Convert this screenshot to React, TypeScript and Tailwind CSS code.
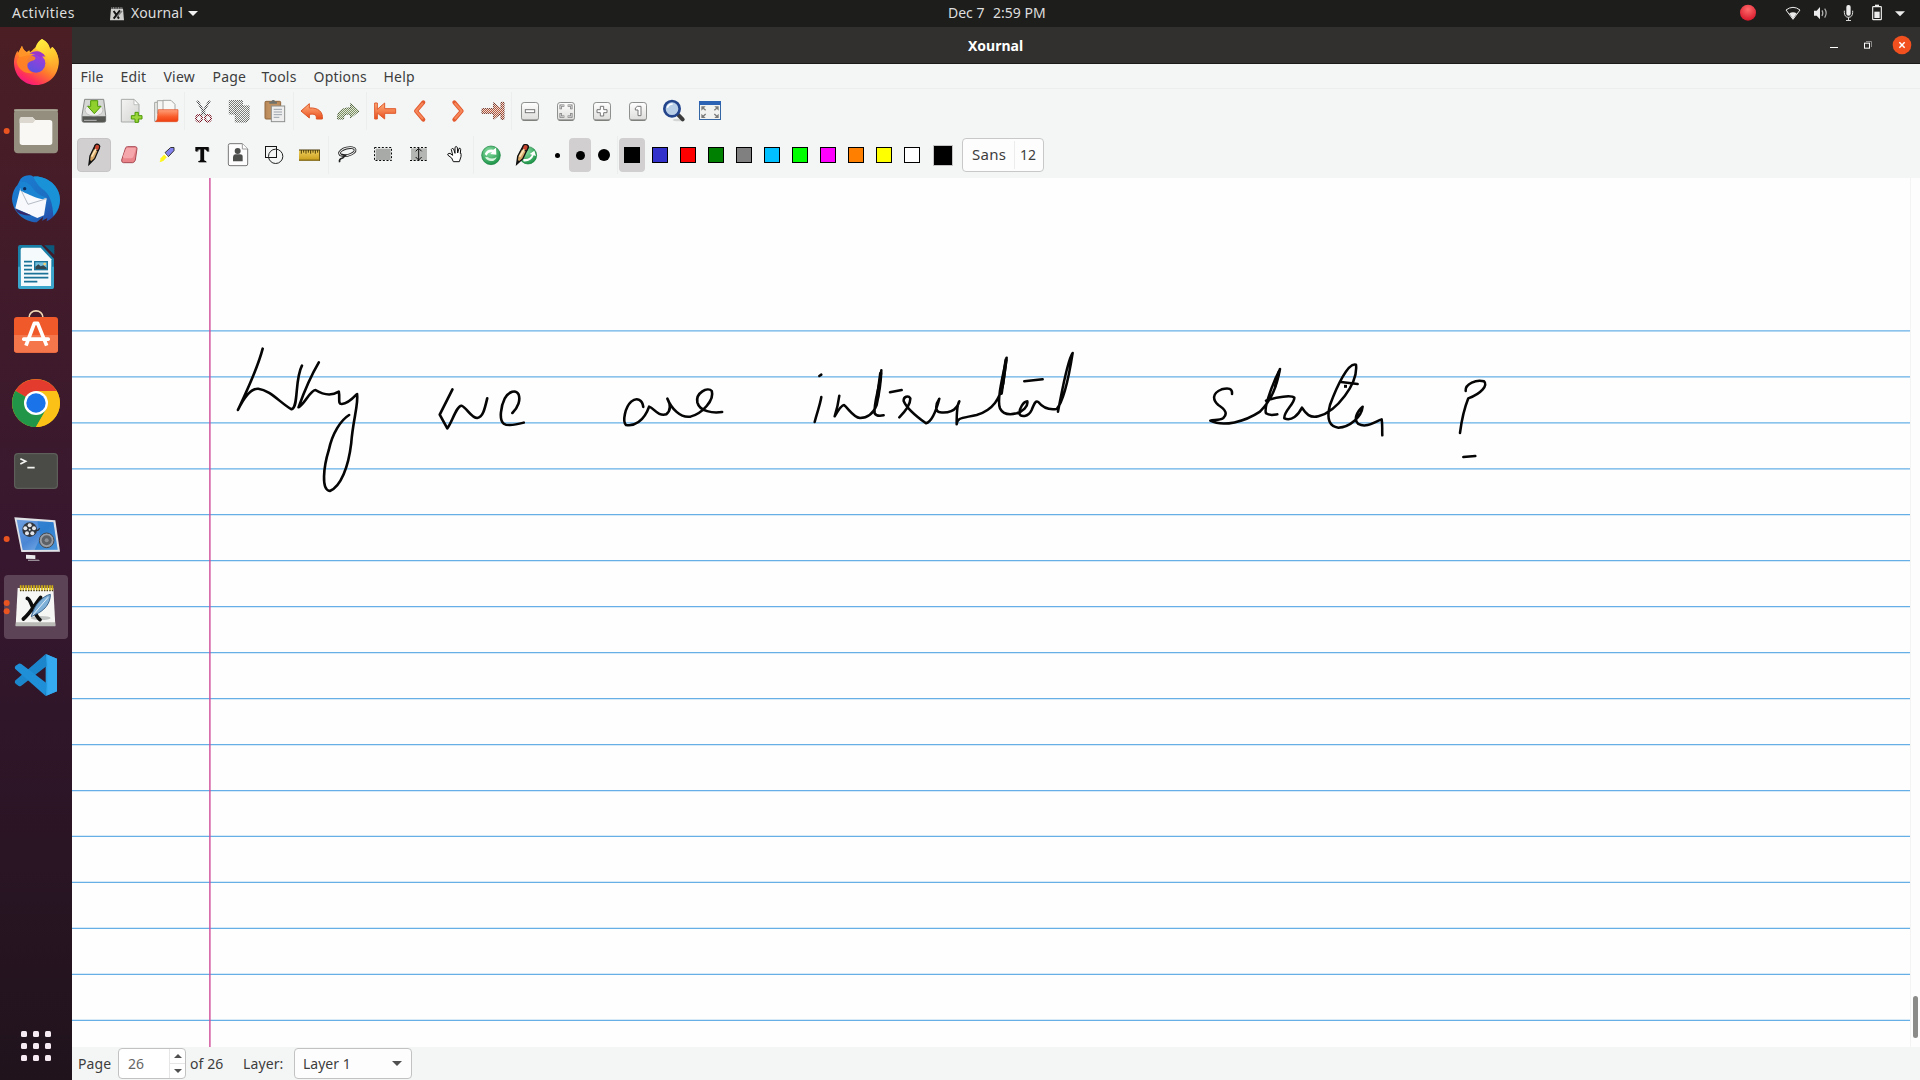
import React from "react";

type IconProps = { cx: number; cy: number; children: React.ReactNode };

/** 36px toolbar cell; artwork is drawn on a 3x grid around (cx, cy). */
function Icon({ cx, cy, children }: IconProps) {
  return (
    <svg className="h-9 w-9 shrink-0" viewBox={`${cx - 54} ${cy - 54} 108 108`}>
      {children}
    </svg>
  );
}

/** 72x68 launcher cell on the same 3x grid. */
function DockIcon({ top, children }: { top: number; children: React.ReactNode }) {
  return (
    <svg className="h-[68px] w-[72px] shrink-0" viewBox={`0 ${top} 216 204`}>
      {children}
    </svg>
  );
}

function Separator() {
  return <div className="h-[38px] w-px shrink-0 bg-[#eceded]" />;
}

function Defs() {
  return (
    <svg className="absolute h-0 w-0">
      <defs>
        <pattern id="hatch" width="6" height="6" patternUnits="userSpaceOnUse">
          <rect width="3" height="3" fill="#f4f6f6" />
          <rect x="3" y="3" width="3" height="3" fill="#f4f6f6" />
        </pattern>
        <linearGradient id="orange" x1="0" y1="0" x2="0" y2="1">
          <stop offset="0" stopColor="#fcb27d" />
          <stop offset="0.5" stopColor="#f5804f" />
          <stop offset="1" stopColor="#e84c1c" />
        </linearGradient>
        <linearGradient id="folder" x1="0" y1="0" x2="0" y2="1">
          <stop offset="0" stopColor="#ffa27c" />
          <stop offset="0.6" stopColor="#fa5a28" />
          <stop offset="1" stopColor="#ee3f10" />
        </linearGradient>
        <linearGradient id="paper" x1="0" y1="0" x2="1" y2="1">
          <stop offset="0" stopColor="#f4f4f2" />
          <stop offset="1" stopColor="#d3d5d2" />
        </linearGradient>
        <linearGradient id="key" x1="0" y1="0" x2="0" y2="1">
          <stop offset="0" stopColor="#ffffff" />
          <stop offset="1" stopColor="#dcdcda" />
        </linearGradient>
        <linearGradient id="gold" x1="0" y1="0" x2="0" y2="1">
          <stop offset="0" stopColor="#f0d060" />
          <stop offset="1" stopColor="#c89c18" />
        </linearGradient>
        <radialGradient id="greenball" cx="0.4" cy="0.3" r="0.8">
          <stop offset="0" stopColor="#8be0a4" />
          <stop offset="1" stopColor="#0f8a3c" />
        </radialGradient>
        <linearGradient id="foxbody" x1="0.85" y1="0" x2="0.25" y2="1">
          <stop offset="0" stopColor="#fff14a" />
          <stop offset="0.35" stopColor="#ffbe2c" />
          <stop offset="0.6" stopColor="#ff7a2c" />
          <stop offset="0.85" stopColor="#ff2e5c" />
          <stop offset="1" stopColor="#f0148a" />
        </linearGradient>
        <linearGradient id="foxflame" x1="0.4" y1="0" x2="0.7" y2="1">
          <stop offset="0" stopColor="#ffec3e" />
          <stop offset="0.5" stopColor="#ffc62e" />
          <stop offset="1" stopColor="#ff8a2c" stopOpacity="0.5" />
        </linearGradient>
        <linearGradient id="foxball" x1="0.8" y1="0" x2="0.3" y2="1">
          <stop offset="0" stopColor="#a63ad8" />
          <stop offset="1" stopColor="#5a52e0" />
        </linearGradient>
        <linearGradient id="bird" x1="0" y1="0" x2="1" y2="1">
          <stop offset="0" stopColor="#1a7fd4" />
          <stop offset="0.6" stopColor="#1d6ec2" />
          <stop offset="1" stopColor="#2b3fa0" />
        </linearGradient>
        <linearGradient id="screen" x1="0" y1="0" x2="1" y2="1">
          <stop offset="0" stopColor="#6f9fe0" />
          <stop offset="0.5" stopColor="#4a86d4" />
          <stop offset="1" stopColor="#8fc0f0" />
        </linearGradient>
        <radialGradient id="record" cx="0.5" cy="0.3" r="0.7">
          <stop offset="0" stopColor="#ff6b6b" />
          <stop offset="1" stopColor="#d8182c" />
        </radialGradient>
      </defs>
    </svg>
  );
}

function Dock() {
  return (
    <nav className="flex w-[72px] shrink-0 flex-col bg-linear-to-b from-[#4b1e24] via-[#37172f] to-[#20131c] pt-[2px]">
      <DockIcon top={87}>
        <path d="M126 117C142 126 148 136 150 148L157 141C168 150 176 168 176 186C176 226 146 255 109 255C71 255 42 226 42 188C42 176 46 160 53 152L54 160L66 137C68 145 72 151 80 156L88 151L90 157C98 152 104 142 109 142C112 128 118 121 126 117Z" fill="url(#foxbody)" />
        <path d="M126 117C142 126 148 136 150 148L157 141C168 150 176 168 176 186C174 206 164 220 150 226C160 206 156 180 138 166C126 158 110 150 106 143C110 130 118 122 126 117Z" fill="url(#foxflame)" />
        <circle cx="108" cy="190" r="28" fill="url(#foxball)" />
        <path d="M88 162C102 148 128 152 136 170C128 168 124 170 122 174C112 164 100 160 88 162Z" fill="#9a36cc" />
        <path d="M50 186C54 166 74 162 92 166C100 168 108 172 106 176C104 182 90 182 84 190C78 202 86 216 100 219C76 224 54 208 50 186Z" fill="#ff8422" opacity="0.9" />
        <path d="M66 137C68 148 76 156 92 164L58 172L54 160Z" fill="#ff9428" />
      </DockIcon>
      <DockIcon top={291}>
        <circle cx="20" cy="393" r="9" fill="#e95420" />
        <rect x="42" y="328" width="132" height="132" rx="12" fill="#938e7e" />
        <rect x="42" y="328" width="132" height="5" rx="2" fill="#aaa695" />
        <path d="M59 359Q59 351 67 351H97L106 360H149Q157 360 157 368V427Q157 435 149 435H67Q59 435 59 427Z" fill="#faf8f4" />
        <path d="M59 359Q59 351 67 351H97L106 360L99 369H59Z" fill="#dcd8cf" />
      </DockIcon>
      <DockIcon top={495}>
        <path d="M62 536C76 524 92 524 100 530C136 526 180 554 180 600C180 630 164 652 140 664L142 654L126 662L130 650L110 667C70 664 38 636 36 596C38 576 44 564 52 556Z" fill="url(#bird)" />
        <path d="M100 530C136 526 180 554 180 600C178 622 172 636 160 648C158 610 150 580 126 566C114 556 106 544 100 530Z" fill="#1a92d8" />
        <path d="M61 565L140 596L132 646L112 654L46 625Z" fill="#f7f9fc" />
        <path d="M61 566L84 613L140 596" fill="none" stroke="#b6bcc6" strokeWidth="3" />
        <path d="M58 546C72 540 92 552 100 566C108 578 124 590 142 592L128 598C100 592 76 578 62 572Z" fill="#1a84d2" />
        <path d="M46 626L94 646C80 648 62 644 52 636Z" fill="#372a6a" />
        <circle cx="74" cy="566" r="5" fill="#0d2a58" />
      </DockIcon>
      <DockIcon top={699}>
        <path d="M133 736H163V764Z" fill="#0b5a7c" />
        <path d="M60 735H124L162 776V860Q162 867 155 867H61Q54 867 54 860V742Q54 735 60 735Z" fill="#1a7fa6" />
        <path d="M68 743H122L154 778V858H62V749Q62 743 68 743Z" fill="#f5fafc" />
        <path d="M54 800H62V858H154V800H162V860Q162 867 155 867H61Q54 867 54 860Z" fill="#3ba6cc" />
        <path d="M72 785H96M72 797H96M72 809H96M72 821H145M72 833H145M72 845H112" stroke="#1a7298" strokeWidth="5" />
        <rect x="102" y="783" width="42" height="28" fill="#1a7298" />
        <rect x="106" y="787" width="34" height="20" fill="#73c0de" />
        <path d="M106 807V800L115 793L122 799L130 796L140 803V807Z" fill="#34444c" />
        <circle cx="134" cy="792" r="4" fill="#f7d070" />
      </DockIcon>
      <DockIcon top={903}>
        <path d="M87 953C87 926 129 926 129 953" fill="none" stroke="#f0d8b4" strokeWidth="5" />
        <rect x="42" y="951" width="132" height="107" rx="9" fill="#f05a2a" />
        <path d="M42 1005H174V1049Q174 1058 165 1058H51Q42 1058 42 1049Z" fill="#f5764a" />
        <path d="M78 1037L103 970H113L140 1037" fill="none" stroke="#fff" strokeWidth="11" strokeLinejoin="round" />
        <rect x="66" y="1012" width="84" height="11" rx="5" fill="#fff" />
      </DockIcon>
      <DockIcon top={27}>
        <circle cx="108" cy="129" r="72" fill="#fbc116" />
        <path d="M108 129L46 93A72 72 0 0 1 170 93Z" fill="#e33b2e" />
        <path d="M46 93A72 72 0 0 0 108 201L139 147L108 129Z" fill="#229648" />
        <path d="M46 93L77 147L108 129Z" fill="#229648" />
        <path d="M108 93H170A72 72 0 0 1 108 201L139 147Z" fill="#fbc116" />
        <circle cx="108" cy="129" r="36" fill="#fff" />
        <circle cx="108" cy="129" r="29" fill="#1a73e8" />
      </DockIcon>
      <DockIcon top={231}>
        <rect x="42" y="279" width="132" height="108" rx="11" fill="#4a4a46" />
        <rect x="44" y="281" width="128" height="104" rx="9" fill="none" stroke="#63635f" strokeWidth="3" />
        <path d="M61 296L77 304L61 312M82 323H104" fill="none" stroke="#f4f4f2" strokeWidth="5" />
      </DockIcon>
      <DockIcon top={435}>
        <circle cx="20" cy="537" r="9" fill="#e95420" />
        <path d="M43 472L166 481L180 575L64 576Z" fill="#dfe1e6" />
        <path d="M50 479L160 487L173 569L68 570Z" fill="url(#screen)" />
        <path d="M112 484L160 487L173 569H104L122 530Z" fill="#1b78cc" opacity="0.6" />
        <circle cx="89" cy="509" r="22" fill="#33373d" />
        <g fill="#e4e6ea">
          <circle cx="89" cy="496" r="6" />
          <circle cx="102" cy="505" r="6" />
          <circle cx="97" cy="520" r="6" />
          <circle cx="81" cy="520" r="6" />
          <circle cx="76" cy="505" r="6" />
          <circle cx="89" cy="509" r="3" />
        </g>
        <path d="M108 512Q116 512 119 505" fill="none" stroke="#33373d" strokeWidth="4" />
        <circle cx="140" cy="541" r="22" fill="#9a9ea5" stroke="#454950" strokeWidth="3" />
        <circle cx="140" cy="541" r="15" fill="#5c6067" />
        <circle cx="140" cy="541" r="6" fill="#8b8f96" />
        <path d="M78 584L106 586V597L78 596Z" fill="#e8e8ea" />
        <path d="M84 599H116L120 602H84Z" fill="#b8b4ba" />
      </DockIcon>
      <DockIcon top={639}>
        <rect x="12" y="645" width="192" height="192" rx="12" fill="#5c4356" />
        <circle cx="20" cy="729" r="9" fill="#e95420" />
        <circle cx="20" cy="754" r="9" fill="#e95420" />
        <path d="M53 684H160L166 797H47Z" fill="#f6f6f4" />
        <path d="M48 787H165L166 799H47Z" fill="#b9b9b6" />
        <path d="M62 676V692M70 676V692M78 676V692M86 676V692M94 676V692M102 676V692M110 676V692M118 676V692M126 676V692M134 676V692M142 676V692M150 676V692M157 676V692" stroke="#d4b414" strokeWidth="5" />
        <path d="M60 692H159" stroke="#4a3f18" strokeWidth="4" strokeDasharray="4 4" />
        <ellipse cx="122" cy="774" rx="30" ry="6" fill="#c2c4c4" />
        <path d="M82 715C94 716 100 765 120 779M122 712C104 735 90 760 70 777" fill="none" stroke="#0c0c0c" strokeWidth="11" strokeLinecap="round" />
        <path d="M94 770C102 735 128 708 151 703C152 730 132 754 104 764Z" fill="#7fb0d8" stroke="#38618c" strokeWidth="3" />
        <path d="M98 766L144 712" stroke="#e4f0fa" strokeWidth="3" />
      </DockIcon>
      <DockIcon top={843}>
        <path d="M137 882L171 896V994L137 1008Z" fill="#2a9fe4" />
        <path d="M137 882L45 962Q43 968 47 971L56 978Q60 980 64 977L140 918Z" fill="#1c86cc" />
        <path d="M137 1008L45 926Q43 920 47 917L56 911Q60 909 64 912L140 970Z" fill="#1f8fd8" />
        <path d="M137 882L171 896V994L137 1008Q142 1006 142 1000V890Q142 884 137 882Z" fill="#35aaf0" />
      </DockIcon>
      <div className="mt-auto mb-[19px] ml-[21px] grid w-[30px] grid-cols-3 gap-[6px]">
        {Array.from({ length: 9 }, (_, i) => (
          <span key={i} className="h-[6px] w-[6px] rounded-[1.5px] bg-[#f7ebf3]" />
        ))}
      </div>
    </nav>
  );
}

function ZoomKey({ cx, children }: { cx: number; children: React.ReactNode }) {
  return (
    <Icon cx={cx} cy={153}>
      <g transform={`translate(${cx} 0)`}>
        <rect x="-25.500" y="127.500" width="51" height="54" rx="8" fill="url(#key)" stroke="#8e908d" strokeWidth="3" />
        <path d="M-22 180H22" stroke="#6e706c" strokeWidth="3" />
        {children}
      </g>
    </Icon>
  );
}

function PencilShape() {
  return (
    <g>
      <path d="M267 493L270 468L286 435Q290 431 296 434Q301 438 298 444L284 476Z" fill="#d8a868" stroke="#111" strokeWidth="4" />
      <path d="M286 435Q290 431 296 434Q301 438 298 444L294 453L282 446Z" fill="#c6452f" stroke="#111" strokeWidth="3" />
      <path d="M275 470L288 447" stroke="#fbe3b4" strokeWidth="5" />
      <path d="M266 495L269 480L276 484Z" fill="#111" />
    </g>
  );
}

function TopToolbar() {
  return (
    <div className="flex h-[46px] items-center border-t border-[#eceeee] pb-px pl-1">
      <Icon cx={282} cy={333}>
        <path d="M254 298H311L317 346V362Q317 367 311 367H252Q246 367 246 362V346Z" fill="#d5d7d5" stroke="#868886" strokeWidth="3" />
        <path d="M247 349H317V362Q317 366 311 366H252Q247 366 247 362Z" fill="#555753" />
        <path d="M252 361H290" stroke="#b8bab8" strokeWidth="3" />
        <ellipse cx="282" cy="330" rx="27" ry="18" fill="#eeeeec" stroke="#b0b2b0" strokeWidth="2" />
        <path d="M272 302H293V319H303L283 341L263 319H272Z" fill="#8fd02c" stroke="#4e9a06" strokeWidth="3" />
      </Icon>
      <Icon cx={390} cy={333}>
        <path d="M364 298H402L417 314V366H364Z" fill="url(#paper)" stroke="#a8aaa7" strokeWidth="3" />
        <path d="M402 298V314H417Z" fill="#fff" stroke="#a8aaa7" strokeWidth="2" />
        <path d="M405 337H415V347H426V357H415V367H405V357H394V347H405Z" fill="#9bd63a" stroke="#4e9a06" strokeWidth="3" />
      </Icon>
      <Icon cx={498} cy={333}>
        <path d="M464 307H480V360L464 364Z" fill="#ecece9" stroke="#a4a6a3" strokeWidth="3" />
        <path d="M472 302H493L503 310V340H472Z" fill="#f5f5f3" stroke="#a4a6a3" strokeWidth="3" />
        <path d="M489 301H513L525 313V336H489Z" fill="#f8f8f6" stroke="#a4a6a3" strokeWidth="3" />
        <path d="M475 329H534V360Q534 365 529 365H466Q472 362 472 356Z" fill="url(#folder)" stroke="#e04a20" strokeWidth="2" />
      </Icon>
      <Separator />
      <Icon cx={609} cy={333}>
        <path d="M592 302L616 345M629 302L604 345" stroke="#4e4e50" strokeWidth="7" />
        <ellipse cx="597" cy="355" rx="9" ry="10" fill="none" stroke="#7c1424" strokeWidth="6" />
        <ellipse cx="624" cy="355" rx="9" ry="10" fill="none" stroke="#7c1424" strokeWidth="6" />
        <rect x="579" y="297" width="63" height="72" fill="url(#hatch)" />
      </Icon>
      <Icon cx={717} cy={333}>
        <path d="M688 302H727V342H688Z" fill="#7e807c" stroke="#555753" strokeWidth="3" />
        <path d="M706 318H747V358L738 366H706Z" fill="#7e807c" stroke="#555753" strokeWidth="3" />
        <rect x="684" y="297" width="66" height="72" fill="url(#hatch)" />
      </Icon>
      <Icon cx={825} cy={333}>
        <rect x="795" y="304" width="47" height="53" rx="3" fill="#b8895a" stroke="#92683c" strokeWidth="3" />
        <rect x="802" y="308" width="34" height="46" fill="#c0905f" />
        <path d="M808 311V305H814Q815 299 820 300Q825 299 825 305H831V311Z" fill="#6f716d" />
        <rect x="814" y="318" width="40" height="47" fill="#eeeeee" stroke="#8d8f8c" strokeWidth="3" />
        <path d="M821 328H846M821 336H846M821 344H846M821 352H838" stroke="#9ba2aa" strokeWidth="3" />
      </Icon>
      <Separator />
      <Icon cx={936} cy={333}>
        <path d="M903 333L928 311V324C954 322 970 336 967 357H949C950 344 944 341 928 343V354Z" fill="url(#orange)" stroke="#dc5424" strokeWidth="3" strokeLinejoin="round" />
      </Icon>
      <Icon cx={1044} cy={333}>
        <path d="M1077 333L1052 311V324C1026 322 1010 336 1013 357H1031C1030 344 1036 341 1052 343V354Z" fill="#7e9260" stroke="#42562c" strokeWidth="3" strokeLinejoin="round" />
        <rect x="1008" y="303" width="72" height="60" fill="url(#hatch)" opacity="0.85" />
      </Icon>
      <Separator />
      <Icon cx={1155} cy={333}>
        <path d="M1124 309H1132V328L1154 309V326H1187V340H1154V357L1132 339V357H1124Z" fill="url(#orange)" stroke="#e05a2c" strokeWidth="3" strokeLinejoin="round" />
      </Icon>
      <Icon cx={63} cy={153}>
        <path d="M70 127L48 153L70 179" fill="none" stroke="#e25a2e" strokeWidth="12" strokeLinejoin="round" strokeLinecap="round" />
        <path d="M69 129L48 153L69 177" fill="none" stroke="#f6875a" strokeWidth="6" strokeLinejoin="round" />
      </Icon>
      <Icon cx={171} cy={153}>
        <path d="M163 127L185 153L163 179" fill="none" stroke="#e25a2e" strokeWidth="12" strokeLinejoin="round" strokeLinecap="round" />
        <path d="M164 129L185 153L164 177" fill="none" stroke="#f6875a" strokeWidth="6" strokeLinejoin="round" />
      </Icon>
      <Icon cx={279} cy={153}>
        <path d="M246 146H281V128L303 147V127H312V178H303V160L281 178V160H246Z" fill="#b8583a" stroke="#6c2c1c" strokeWidth="3" />
        <rect x="243" y="123" width="72" height="60" fill="url(#hatch)" opacity="0.85" />
      </Icon>
      <Separator />
      <ZoomKey cx={390}>
        <rect x="-14" y="149" width="28" height="9" fill="#fff" stroke="#777" strokeWidth="3" />
      </ZoomKey>
      <ZoomKey cx={498}>
        <path d="M-16 148V137H-5M5 137H16V148M16 159V170H5M-5 170H-16V159" fill="none" stroke="#777" strokeWidth="7" />
        <path d="M-16 146V137H-6M6 137H16V146M16 161V170H6M-6 170H-16V161" fill="none" stroke="#fff" strokeWidth="2" />
      </ZoomKey>
      <ZoomKey cx={606}>
        <path d="M-5 139H5V149H15V158H5V168H-5V158H-15V149H-5Z" fill="#fff" stroke="#777" strokeWidth="3" />
      </ZoomKey>
      <ZoomKey cx={714}>
        <path d="M-2 139H9V167H0V150H-8V144Z" fill="#fff" stroke="#777" strokeWidth="3" />
      </ZoomKey>
      <Icon cx={822} cy={153}>
        <ellipse cx="836" cy="180" rx="18" ry="4" fill="#d4d6d4" />
        <path d="M834 164L848 178" stroke="#3c3c3c" strokeWidth="12" strokeLinecap="round" />
        <circle cx="816" cy="146" r="23" fill="#b9cfe8" stroke="#24458c" strokeWidth="8" />
        <path d="M802 143Q806 132 818 132" fill="none" stroke="#fff" strokeWidth="5" />
      </Icon>
      <Icon cx={930} cy={153}>
        <rect x="898.500" y="124.500" width="63" height="54" fill="#f2f2f0" stroke="#3465a4" strokeWidth="3" />
        <rect x="897" y="123" width="66" height="12" fill="#2c62b4" />
        <path d="M904 139H917L904 152ZM956 139V152L943 139ZM904 174V161L917 174ZM956 174H943L956 161Z" fill="#7c7c7c" />
        <path d="M908 143L917 151M952 143L943 151M908 170L917 162M952 170L943 162" stroke="#7c7c7c" strokeWidth="4" />
      </Icon>
    </div>
  );
}

const PEN_COLOURS = [
  "bg-[#3333cc]",
  "bg-[#ff0000]",
  "bg-[#008000]",
  "bg-[#808080]",
  "bg-[#00c0ff]",
  "bg-[#00ff00]",
  "bg-[#ff00ff]",
  "bg-[#ff8000]",
  "bg-[#ffff00]",
  "bg-white",
];

function PenToolbar() {
  return (
    <div className="flex h-[44px] items-center pb-[2px] pl-1">
      <div className="mx-px flex h-[34px] w-[34px] items-center justify-center rounded-[4px] border border-[#c6c4c4] bg-[#d1cfcf]">
        <Icon cx={282} cy={465}>
          <PencilShape />
        </Icon>
      </div>
      <Icon cx={390} cy={465}>
        <path d="M377 443Q379 440 383 440H406Q411 440 411 446L406 480Q404 487 398 488H370Q364 487 365 480Z" fill="#e8848a" stroke="#a84a52" strokeWidth="3" />
        <path d="M378 446Q380 443 384 443H405Q409 444 407 449L400 471Q398 475 393 475H373Q368 474 369 469Z" fill="#f4a6aa" />
      </Icon>
      <Icon cx={498} cy={465}>
        <g transform="translate(1 0)">
          <path d="M494 458L511 442.500H521V452L504 470Z" fill="#8282f0" stroke="#333" strokeWidth="3" />
          <path d="M479 486L481 475L494 461L502 469L489 483Z" fill="#fdf51c" />
          <path d="M477 487L484 478L487 482Z" fill="#fdf51c" />
          <path d="M491 460L501 470" stroke="#fff" strokeWidth="4" />
        </g>
      </Icon>
      <Icon cx={606} cy={465}>
        <path d="M588 443H628V456H622Q620 449 613 449V480Q613 484 620 484V488H596V484Q603 484 603 480V449Q596 449 594 456H588Z" fill="#8c8c8c" />
        <path d="M586 441H626V454H621Q619 447 612 447V479Q612 483 618 483V486H595V483Q601 483 601 479V447Q594 447 591 454H586Z" fill="#0a0a0a" />
      </Icon>
      <Icon cx={714} cy={465}>
        <path d="M690 431H727L743 447V492Q743 497 738 497H690Q685 497 685 492V436Q685 431 690 431Z" fill="#fdfdfd" stroke="#777" strokeWidth="3" />
        <path d="M727 431V447H743" fill="#fff" stroke="#999" strokeWidth="3" />
        <circle cx="713" cy="453" r="9" fill="#4c4e4c" />
        <path d="M699 484V470Q700 463 707 463H720Q728 463 728 470V484Z" fill="#4c4e4c" />
      </Icon>
      <Icon cx={822} cy={465}>
        <rect x="796.500" y="439.500" width="33" height="33" fill="none" stroke="#151515" strokeWidth="3" />
        <circle cx="827" cy="469" r="21.500" fill="none" stroke="#222" strokeWidth="3" />
      </Icon>
      <Icon cx={930} cy={465}>
        <path d="M897 450H960V482H897Z" fill="url(#gold)" />
        <path d="M897 480.500H960M958.500 450V482" stroke="#6e5a14" strokeWidth="3" />
        <path d="M904 450V461M911 450V458M918 450V461M925 450V458M932 450V461M939 450V458M946 450V461M953 450V458M897 450H960" stroke="#4a3b08" strokeWidth="3" />
      </Icon>
      <Separator />
      <Icon cx={1041} cy={465}>
        <ellipse cx="1042" cy="455" rx="24" ry="11" transform="rotate(-14 1042 455)" fill="none" stroke="#222" strokeWidth="8" />
        <ellipse cx="1042" cy="455" rx="24" ry="11" transform="rotate(-14 1042 455)" fill="none" stroke="#f0f0f0" strokeWidth="3" />
        <path d="M1024 463L1036 466L1028 474Q1016 476 1019 487" fill="none" stroke="#222" strokeWidth="5" />
      </Icon>
      <Icon cx={1149} cy={465}>
        <rect x="1127" y="446" width="45" height="34" fill="#a8aaa8" />
        <rect x="1123.500" y="442.500" width="51" height="39" fill="none" stroke="#0a0a0a" strokeWidth="3" strokeDasharray="6 5" />
      </Icon>
      <Icon cx={57} cy={285}>
        <rect x="33" y="265" width="48" height="36" fill="#b4b6b4" />
        <path d="M30 262.500H84M30 301.500H84" stroke="#0a0a0a" strokeWidth="3" strokeDasharray="6 5" />
        <path d="M56 266V299M47 274L56 265L65 274M47 291L56 300L65 291" fill="none" stroke="#111" strokeWidth="3" />
      </Icon>
      <Icon cx={165} cy={285}>
        <path d="M160 305L155 294L143 285Q143 279 150 280L158 286L154 268Q156 263 161 267L165 280V262Q168 257 172 262L173 279L177 265Q181 263 182 268L181 281Q184 276 183 290L178 305Z" fill="#fff" stroke="#111" strokeWidth="3" strokeLinejoin="round" />
      </Icon>
      <Separator />
      <Icon cx={276} cy={285}>
        <circle cx="273" cy="286" r="28" fill="url(#greenball)" stroke="#12803a" strokeWidth="2" />
        <path d="M254 282Q262 266 280 269L288 263L289 284L271 282L276 277Q264 276 260 287Z" fill="#fff" />
        <path d="M255 292Q264 307 281 302Q288 299 290 291Q276 300 262 291Z" fill="#d9f5e0" />
      </Icon>
      <Icon cx={384} cy={285}>
        <circle cx="384" cy="286" r="26" fill="url(#greenball)" stroke="#12803a" strokeWidth="2" />
        <path d="M370 296Q388 300 396 284L389 282L403 272L408 288L401 286Q394 306 370 304Z" fill="#fff" />
        <g transform="translate(349 253) scale(1.080 0.980) translate(-266 -432)">
          <PencilShape />
        </g>
      </Icon>
      <div className="flex h-9 w-[71px] items-center">
        <div className="flex w-[22px] justify-center">
          <span className="h-[5px] w-[5px] rounded-full bg-black" />
        </div>
        <div className="mx-px flex h-[34px] w-[22px] items-center justify-center rounded-[4px] bg-[#d1cfcf]">
          <span className="h-[9px] w-[9px] rounded-full bg-black" />
        </div>
        <div className="flex w-[24px] justify-center">
          <span className="h-3 w-3 rounded-full bg-black" />
        </div>
      </div>
      <Separator />
      <div className="mx-px flex h-[34px] w-[26px] items-center justify-center rounded-[4px] bg-[#d1cfcf]">
        <span className="h-4 w-4 bg-black" />
      </div>
      {PEN_COLOURS.map((colour) => (
        <div key={colour} className="flex w-7 justify-center">
          <span className={`h-4 w-4 border border-black ${colour}`} />
        </div>
      ))}
      <span className="ml-[7px] h-[21px] w-[20px] border border-[#c4c4c4] bg-black" />
      <div className="ml-[9px] flex h-[34px] w-[82px] items-center rounded-[4px] border border-[#c8c8c8] bg-[#fdfdfd] pb-px text-[15px] text-[#3d3d3d]">
        <span className="w-[51px] pl-[9px] tracking-[0.25px]">Sans</span>
        <span className="flex h-[28px] items-center border-l border-[#ececec] pl-[5px] text-[14px]">12</span>
      </div>
    </div>
  );
}

const RULES = Array.from({ length: 16 }, (_, i) => 330.9 + i * 45.96);

function Canvas() {
  return (
    <div className="flex h-[869px] bg-[#fefefe]">
      <svg className="h-[869px] w-[1838px] shrink-0" viewBox="72 178 1838 869">
        {RULES.map((y) => (
          <path key={y} d={`M72 ${y}H1910`} stroke="#66afe6" strokeWidth="1.250" />
        ))}
        <path d="M209.900 178V1047" stroke="#d04a98" strokeWidth="1.400" />
        <g fill="none" stroke="#050505" strokeLinecap="round" strokeLinejoin="round" strokeWidth="7.600">
          <g transform="translate(210 320) scale(0.3444 0.3333)">
            <path d="M153 86C143 125 125 175 81 270C95 240 115 205 140 206C175 210 205 250 237 268C258 262 245 180 267 137" />
            <path d="M316 127C300 155 275 210 257 262C275 252 290 212 306 210C325 222 350 230 374 215C378 235 370 253 383 252C400 252 415 235 427 222C432 250 415 300 410 370C402 440 380 500 348 513C322 510 330 440 345 390C355 340 380 300 404 285" />
            <path d="M704 208L667 284L689 325C702 310 715 258 730 257C745 262 758 294 776 294C792 292 797 270 805 235" />
            <path d="M878 279C895 262 902 240 896 223C888 208 868 214 856 235C845 258 838 300 853 311C865 320 890 314 911 308" />
            <path d="M1258 261C1256 240 1240 230 1223 245C1205 262 1197 305 1208 315C1230 320 1260 305 1275 260C1290 265 1300 290 1325 283C1340 270 1338 255 1328 236C1340 265 1365 295 1395 290C1430 280 1465 240 1457 213C1445 200 1410 218 1415 247C1422 275 1460 280 1487 276" />
          </g>
          <g transform="translate(780 330) scale(0.3333)">
            <path d="M124 201C120 225 112 245 104 276M118 138L124 134" />
            <path d="M178 197C175 220 170 240 164 259C175 240 185 225 192 225C205 235 220 262 240 264C265 264 280 250 290 225C298 190 303 150 304 121C300 170 280 220 284 250C288 258 300 258 311 256" />
            <path d="M302 130L292 205" strokeWidth="10" />
            <path d="M330 187L365 180M733 154L788 148" />
            <path d="M358 262C375 245 392 225 391 205C385 195 370 200 371 213C380 235 410 260 438 280C455 275 468 245 478 206C465 225 466 245 480 247C500 250 530 245 538 214C530 225 530 255 530 283C532 262 545 265 590 255C640 240 660 205 670 160L680 83C668 140 650 210 660 235C670 255 690 255 710 250C728 245 745 230 742 214C730 215 718 235 718 250C722 262 745 262 755 240C765 215 768 212 775 216C790 235 810 240 830 237C855 210 870 120 878 69C862 90 845 190 834 245" />
            <path d="M678 90L664 190" strokeWidth="10" />
          </g>
          <g transform="translate(1180 340) scale(0.3333)">
            <path d="M156 162C158 145 145 143 125 148C95 160 98 180 115 195C138 210 143 222 130 234C118 243 100 238 91 242C130 262 195 245 240 215C275 180 290 140 300 87C285 115 250 200 258 220C268 228 285 224 292 223" />
            <path d="M297 95L285 140" strokeWidth="8" />
            <path d="M258 182C290 170 335 165 343 173C345 190 310 215 313 235C335 245 355 225 366 203C378 222 390 235 415 229C470 215 535 130 528 74C505 65 470 140 450 195C438 240 450 260 475 263C510 262 545 230 548 200C530 215 520 240 535 252C560 265 585 245 605 238C608 255 606 270 607 286" />
            <path d="M483 126L533 132" />
            <path d="M492 139H501" strokeLinecap="butt" strokeWidth="9" />
            <path d="M857 153C855 130 890 118 912 124C925 135 905 160 865 175C855 200 845 240 840 279M850 351L886 348" />
          </g>
        </g>
      </svg>
      <div className="flex w-[10px] flex-col items-center border-l border-[#f3f3f3] bg-[#fdfdfd]">
        <span className="mt-[818px] h-[42px] w-[5px] rounded-full bg-[#8b8b8a]" />
      </div>
    </div>
  );
}

function StatusBar() {
  return (
    <div className="flex h-[33px] items-start bg-[#f4f6f6] pt-px text-[14px] tracking-[0.1px] text-[#3d3d3d]">
      <span className="w-[46px] pl-[6px] pt-[5px] leading-[21px]">Page</span>
      <div className="flex h-[31px] w-[68px] rounded-[4px] border border-[#c2c2c2] bg-white">
        <span className="w-[50px] pl-[9px] pt-[4px] leading-[21px] text-[#666]">26</span>
        <div className="flex flex-1 flex-col border-l border-[#e6e6e6]">
          <div className="flex flex-1 items-center justify-center border-b border-[#e6e6e6]">
            <svg className="h-1 w-2" viewBox="0 0 8 4">
              <path d="M0 4L4 0L8 4Z" fill="#505050" />
            </svg>
          </div>
          <div className="flex flex-1 items-center justify-center">
            <svg className="h-1 w-2" viewBox="0 0 8 4">
              <path d="M0 0L4 4L8 0Z" fill="#505050" />
            </svg>
          </div>
        </div>
      </div>
      <span className="w-[53px] pl-[4px] pt-[5px] leading-[21px]">of 26</span>
      <span className="w-[55px] pl-[4px] pt-[5px] leading-[21px]">Layer:</span>
      <div className="flex h-[31px] w-[118px] items-center justify-between rounded-[4px] border border-[#c2c2c2] bg-[#fdfdfd] pl-[8px] pr-[9px]">
        <span className="leading-[21px] tracking-normal">Layer 1</span>
        <svg className="h-[5px] w-[10px]" viewBox="0 0 10 5">
          <path d="M0 0L5 5L10 0Z" fill="#505050" />
        </svg>
      </div>
    </div>
  );
}

function SystemBar() {
  return (
    <header className="grid h-[27px] shrink-0 grid-cols-[948px_1fr_192px] items-center bg-[#1d1d1b] text-[14px] text-[#dedede]">
      <div className="flex items-center">
        <span className="w-[110px] pb-[2px] pl-3 tracking-[0.45px]">Activities</span>
        <svg className="h-[14px] w-[14px]" viewBox="0 0 42 42">
          <path d="M3 5H39L42 40H0Z" fill="#cfcfcd" />
          <path d="M4 3H38" stroke="#999" strokeWidth="4" strokeDasharray="3 2" />
          <path d="M11 12L27 35M30 10L11 35" stroke="#161616" strokeWidth="6" />
          <path d="M20 30L36 12" stroke="#7c7c7c" strokeWidth="4" />
        </svg>
        <span className="w-[58px] pb-[2px] pl-[7px] tracking-[0.1px]">Xournal</span>
        <svg className="ml-[6px] h-[5px] w-[10px]" viewBox="0 0 10 5">
          <path d="M0 0L5 5L10 0Z" fill="#f0f0f0" />
        </svg>
      </div>
      <div className="flex pb-[2px]">
        <span className="w-[45px]">Dec 7</span>
        <span>2:59 PM</span>
      </div>
      <svg className="h-[27px] w-[192px]" viewBox="84 0 576 81">
        <circle cx="144" cy="38" r="24" fill="url(#record)" />
        <path d="M258 30Q279 14 300 30L279 58Z" fill="none" stroke="#ececec" strokeWidth="3" />
        <path d="M268 40Q279 34 290 40L279 57Z" fill="#ececec" />
        <path d="M342 32H350L360 21V58L350 47H342Z" fill="#ececec" />
        <path d="M366 31Q371 39 366 48M374 26Q383 39 374 53" fill="none" stroke="#b5b5b5" strokeWidth="3.500" />
        <rect x="439" y="15" width="13" height="32" rx="6" fill="#ececec" />
        <path d="M433 32V38Q434 52 445.500 52Q457 52 458 38V32M445.500 52V62M438 61.500H453" fill="none" stroke="#d8d8d8" strokeWidth="3" />
        <rect x="518" y="20" width="26" height="39" rx="2" fill="none" stroke="#ececec" strokeWidth="3.500" />
        <rect x="525" y="14" width="12" height="6" fill="#ececec" />
        <rect x="523" y="35" width="16" height="19" fill="#ececec" />
        <path d="M585 34H615L600 49Z" fill="#ececec" />
      </svg>
    </header>
  );
}

const MENU: [string, string][] = [
  ["File", "w-[40px]"],
  ["Edit", "w-[43px]"],
  ["View", "w-[49px]"],
  ["Page", "w-[49px]"],
  ["Tools", "w-[52px]"],
  ["Options", "w-[70px]"],
  ["Help", "w-[40px]"],
];

export default function App() {
  return (
    <div className="flex h-[1080px] w-[1920px] flex-col overflow-hidden bg-[#1d1d1b] font-['Noto_Sans',sans-serif]">
      <Defs />
      <SystemBar />
      <div className="flex flex-1">
        <Dock />
        <main className="flex w-[1848px] flex-col bg-[#f4f6f6]">
          <div className="grid h-[37px] grid-cols-[1fr_auto_1fr] items-center border-b border-[#1b1a19] bg-[#32302f]">
            <span />
            <span className="pr-px text-[14px] font-bold text-white">Xournal</span>
            <svg className="h-9 w-[132px] justify-self-end" viewBox="264 81 396 108">
              <path d="M390 142.500H414" stroke="#fff" strokeWidth="3" />
              <rect x="493.500" y="129.500" width="15" height="15" fill="none" stroke="#fff" strokeWidth="3" />
              <path d="M498 124.500H514.500V141" fill="none" stroke="#8b8a89" strokeWidth="3" />
              <circle cx="606" cy="135" r="28" fill="#f2501f" />
              <path d="M598 127L614 143M614 127L598 143" stroke="#fff" strokeWidth="4.500" />
            </svg>
          </div>
          <div className="flex h-[24px] items-center pl-[8.5px] text-[14px] tracking-[0.2px] text-[#3d3d3d]">
            {MENU.map(([label, width]) => (
              <span key={label} className={width}>
                {label}
              </span>
            ))}
          </div>
          <TopToolbar />
          <PenToolbar />
          <Canvas />
          <StatusBar />
        </main>
      </div>
    </div>
  );
}
